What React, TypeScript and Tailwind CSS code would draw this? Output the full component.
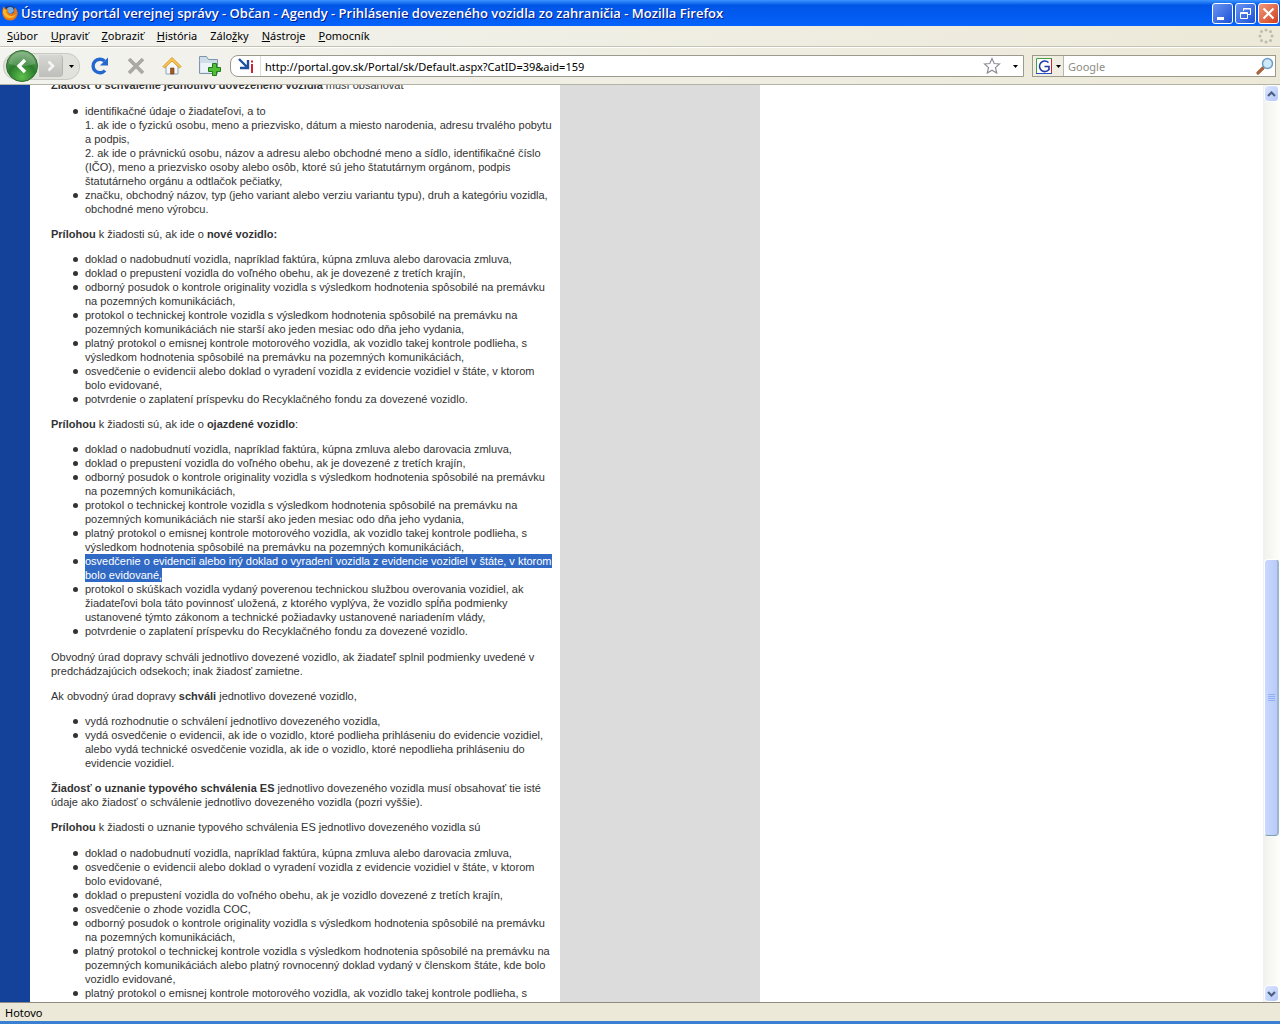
import type { ReactNode } from "react";

const menu = [
  { before: "", key: "S", after: "úbor" },
  { before: "", key: "U", after: "praviť" },
  { before: "", key: "Z", after: "obraziť" },
  { before: "", key: "H", after: "istória" },
  { before: "Zálo", key: "ž", after: "ky" },
  { before: "", key: "N", after: "ástroje" },
  { before: "", key: "P", after: "omocník" },
];

const newCar = [
  "doklad o nadobudnutí vozidla, napríklad faktúra, kúpna zmluva alebo darovacia zmluva,",
  "doklad o prepustení vozidla do voľného obehu, ak je dovezené z tretích krajín,",
  "odborný posudok o kontrole originality vozidla s výsledkom hodnotenia spôsobilé na premávku\nna pozemných komunikáciách,",
  "protokol o technickej kontrole vozidla s výsledkom hodnotenia spôsobilé na premávku na\npozemných komunikáciách nie starší ako jeden mesiac odo dňa jeho vydania,",
  "platný protokol o emisnej kontrole motorového vozidla, ak vozidlo takej kontrole podlieha, s\nvýsledkom hodnotenia spôsobilé na premávku na pozemných komunikáciách,",
];

const recycling =
  "potvrdenie o zaplatení príspevku do Recyklačného fondu za dovezené vozidlo.";

const deregistered =
  "osvedčenie o evidencii alebo doklad o vyradení vozidla z evidencie vozidiel v štáte, v ktorom\nbolo evidované,";

const typeApproval = [
  newCar[0],
  deregistered,
  "doklad o prepustení vozidla do voľného obehu, ak je vozidlo dovezené z tretích krajín,",
  "osvedčenie o zhode vozidla COC,",
  newCar[2],
  "platný protokol o technickej kontrole vozidla s výsledkom hodnotenia spôsobilé na premávku na\npozemných komunikáciách alebo platný rovnocenný doklad vydaný v členskom štáte, kde bolo\nvozidlo evidované,",
  newCar[4],
];

function Bullets({ items }: { items: ReactNode[] }) {
  return (
    <ul>
      {items.map((item, i) => (
        <li key={i} className="flex">
          <span className="mt-[5px] mr-[7px] ml-[22px] size-[5px] shrink-0 rounded-full bg-[#333]" />
          <span>{item}</span>
        </li>
      ))}
    </ul>
  );
}

function TitleBar() {
  const button =
    "flex size-[21px] items-center justify-center rounded-[3px] border border-white";
  return (
    <header className="flex h-[26px] shrink-0 items-center bg-linear-to-b from-[#3c95ff] via-[#0055e6] via-20% to-[#0562fb] pr-px pl-[2px]">
      <svg viewBox="0 0 16 16" className="size-4 shrink-0">
        <circle cx="8" cy="7.5" r="7" fill="#1c3f8c" />
        <path d="M5 3.5q3-2.500 6-.5l1 3-3 3-4-2z" fill="#6fb0e8" />
        <path
          d="M1.500 1.500 4 4l3 .5-1.500 2L7 8c2 2 4 .5 5-1l.5-4.500C15 4 16.200 7 15.400 9.800A7.600 7.600 0 0 1 .6 9.600C0 7 .4 4 1.500 1.500z"
          fill="#e8781a"
        />
        <path d="M1.500 3 3 5l2 .3L4 7l2 3c3 2 6 1 8-1-1.500 4-5 5-8 4S1 9 1 7z" fill="#fbb829" />
      </svg>
      <h1 className="ml-[3px] flex-1 truncate font-['Open_Sans','Noto_Sans',sans-serif] text-[13px] leading-5 font-semibold text-white [text-shadow:1px_1px_0_#0a1883]">
        Ústredný portál verejnej správy - Občan - Agendy - Prihlásenie dovezeného vozidla zo
        zahraničia - Mozilla Firefox
      </h1>
      <div className="flex gap-[2px]">
        <button aria-label="Minimalizovať" className={`${button} bg-linear-to-br from-[#6a93f2] to-[#1b4fd6]`}>
          <svg viewBox="0 0 19 19" className="size-[19px]">
            <path d="M4 13h7v3H4z" fill="#fff" />
          </svg>
        </button>
        <button aria-label="Obnoviť" className={`${button} bg-linear-to-br from-[#6a93f2] to-[#1b4fd6]`}>
          <svg viewBox="0 0 19 19" className="size-[19px]" fill="none" stroke="#fff">
            <path d="M7.500 7V4.500h7v6H12M7 5h8" />
            <path d="M4.500 8.500h7v6h-7zM4 9.500h8" />
          </svg>
        </button>
        <button aria-label="Zavrieť" className={`${button} bg-linear-to-br from-[#f0977c] to-[#cf3a12]`}>
          <svg viewBox="0 0 19 19" className="size-[19px]">
            <path d="m4.500 4.500 10 10m0-10-10 10" stroke="#fff" strokeWidth="2.200" />
          </svg>
        </button>
      </div>
    </header>
  );
}

function MenuBar() {
  return (
    <nav className="flex h-[21px] shrink-0 items-center border-b border-[#c5c2b2] bg-linear-to-r from-[#f3f3ef] to-[#ece9d8] pr-[6px] pl-[7px]">
      <div className="flex flex-1 gap-[13px]">
        {menu.map((m) => (
          <button key={m.key} className="leading-4">
            {m.before}
            <span className="underline">{m.key}</span>
            {m.after}
          </button>
        ))}
      </div>
      <svg viewBox="0 0 16 16" className="size-4" fill="#bdbbb0">
        <circle cx="8" cy="2" r="1.500" />
        <circle cx="12.500" cy="3.600" r="1.500" />
        <circle cx="14" cy="8" r="1.500" />
        <circle cx="12.500" cy="12.400" r="1.500" />
        <circle cx="8" cy="14" r="1.500" />
        <circle cx="3.500" cy="12.400" r="1.500" />
        <circle cx="2" cy="8" r="1.500" />
        <circle cx="3.500" cy="3.600" r="1.500" />
      </svg>
    </nav>
  );
}

function Caret() {
  return (
    <svg viewBox="0 0 5 3" className="h-[3px] w-[5px]">
      <path d="M0 0h5L2.500 3z" fill="#000" />
    </svg>
  );
}

function ToolBar() {
  return (
    <div className="flex h-[38px] shrink-0 items-center border-t border-b border-t-white border-b-[#b5b3a4] bg-linear-to-r from-[#f3f3ef] to-[#ece9d8] pr-1 pl-[3px]">
      <div className="flex h-[27px] items-center rounded-[13px] border border-[#c9c9c3] bg-[#e2e2dd]">
        <button aria-label="Späť" className="-my-1 ml-px">
          <svg viewBox="0 0 34 34" className="size-[34px]">
            <defs>
              <radialGradient id="back" cx=".5" cy=".85" r=".8">
                <stop offset="0" stopColor="#5fc04d" />
                <stop offset=".55" stopColor="#2a7d2c" />
                <stop offset="1" stopColor="#6fa56c" />
              </radialGradient>
            </defs>
            <circle cx="17" cy="17" r="15.500" fill="url(#back)" stroke="#2b6d2d" />
            <path d="M4 15a13 12 0 0 1 26 0q-13 4-26 0z" fill="#fff" opacity=".2" />
            <path d="m20 11-6 6 6 6" fill="none" stroke="#fff" strokeWidth="3.400" />
          </svg>
        </button>
        <button
          aria-label="Ďalej"
          className="flex h-[22px] w-6 items-center justify-center rounded-r-sm border-r border-[#b4b4b0] bg-linear-to-b from-[#d6d6d3] to-[#bebebb]"
        >
          <svg viewBox="0 0 10 12" className="h-3 w-[10px]">
            <path d="m2.500 1.500 4.500 4.500-4.500 4.500" fill="none" stroke="#f5f5f5" strokeWidth="2.600" />
          </svg>
        </button>
        <button aria-label="História stránok" className="flex h-full w-4 items-center justify-center">
          <Caret />
        </button>
      </div>
      <div className="ml-[10px] flex items-center gap-4">
        <button aria-label="Obnoviť stránku">
          <svg viewBox="0 0 20 20" className="size-5">
            <path d="M15 14.500A6.800 6.800 0 1 1 14.500 5" fill="none" stroke="#2468cf" strokeWidth="3.400" />
            <path d="M18 1.500v8h-8z" fill="#2468cf" />
          </svg>
        </button>
        <button aria-label="Zastaviť">
          <svg viewBox="0 0 20 20" className="size-5">
            <path d="m3 3 14 14m0-14L3 17" stroke="#aaa9a3" strokeWidth="3.800" />
          </svg>
        </button>
        <button aria-label="Domov">
          <svg viewBox="0 0 20 20" className="size-5">
            <path d="M4 10v8h12v-8l-6-6z" fill="#f4f7fb" stroke="#8ba3bf" />
            <path d="M8.500 12h3.500v6H8.500z" fill="#a35a1f" stroke="#6b3a12" strokeWidth=".6" />
            <path d="M10 1.500 1 10.500l1.500 1.500L10 5l7.500 7 1.500-1.500z" fill="#fbc85a" stroke="#d88f17" strokeWidth=".9" />
          </svg>
        </button>
        <button aria-label="Nová karta">
          <svg viewBox="0 0 24 22" className="h-[22px] w-6">
            <path d="M1.500 5.500v-4h7l2 3h9v14h-18z" fill="#cfdde9" stroke="#7d96ad" />
            <path d="M2.500 8h16v9.500h-16z" fill="#edf3f8" />
            <path d="M14.500 8.500h4v4h4v4h-4v4h-4v-4h-4v-4h4z" fill="#4fbf35" stroke="#237a18" />
          </svg>
        </button>
      </div>
      <form className="ml-2 flex h-[22px] min-w-0 flex-1 items-center rounded-l-lg border border-[#9b9a8d] bg-white">
        <span className="flex h-full w-[30px] items-center justify-center border-r border-[#ddd]">
          <svg viewBox="0 0 18 16" className="h-4 w-[18px]">
            <path d="m2 1 8 8m1-7v8H3" fill="none" stroke="#1d4f9e" strokeWidth="2.400" />
            <path d="M14 6h2v9h-2zM14 2.500h2v2h-2z" fill="#d21f2f" />
          </svg>
        </span>
        <input
          aria-label="Adresa"
          defaultValue="http://portal.gov.sk/Portal/sk/Default.aspx?CatID=39&aid=159"
          className="min-w-0 flex-1 bg-transparent pt-[2px] pl-1 leading-4 outline-none"
        />
        <button type="button" aria-label="Pridať záložku" className="mr-3">
          <svg viewBox="0 0 18 18" className="size-[18px]">
            <path
              d="m9 1.500 2.200 5 5.300.5-4 3.600 1.200 5.400L9 13.200 4.300 16l1.200-5.400L1.500 7l5.300-.5z"
              fill="#fff"
              stroke="#8e8e98"
              strokeWidth="1.200"
            />
          </svg>
        </button>
        <button type="button" aria-label="Zobraziť adresy" className="mr-[5px]">
          <Caret />
        </button>
      </form>
      <form className="ml-2 flex h-[22px] w-[244px] items-center border border-[#9b9a8d] bg-white">
        <button
          type="button"
          aria-label="Vyhľadávač"
          className="flex h-full w-[31px] items-center gap-1 border-r border-[#b9b7a8] bg-[#f0eee3] pl-[3px]"
        >
          <svg viewBox="0 0 16 16" className="size-4">
            <path d="M0 0h16v16H0z" fill="#fff" />
            <path d="M.5 16V.5H16" fill="none" stroke="#3fa13f" />
            <path d="M15.500 1v14.500" stroke="#c9252b" />
            <path d="M0 15.500h16" stroke="#2a4ec0" />
            <path d="M12.500 4.500A5.300 5.300 0 1 0 13 11.500V8.500H8.500" fill="none" stroke="#1f3aa6" strokeWidth="1.600" />
          </svg>
          <Caret />
        </button>
        <input
          aria-label="Hľadať"
          placeholder="Google"
          className="min-w-0 flex-1 bg-transparent pt-[2px] pl-1 leading-4 outline-none placeholder:text-[#8d8d85]"
        />
        <button type="button" aria-label="Spustiť hľadanie" className="mr-px">
          <svg viewBox="0 0 18 18" className="size-[18px]">
            <path d="m2 16 5-5" stroke="#a8643c" strokeWidth="3.200" strokeLinecap="round" />
            <circle cx="11.500" cy="6.500" r="5" fill="#cfe8fa" stroke="#6d9cc8" strokeWidth="1.500" />
          </svg>
        </button>
      </form>
    </div>
  );
}

function Article() {
  return (
    <article className="-mt-[7px] space-y-3 pr-3 pl-[21px] font-['Liberation_Sans',Arial,sans-serif] text-[11px] leading-[14px] whitespace-pre text-[#333]">
      <p>
        <b>Žiadosť o schválenie jednotlivo dovezeného vozidla</b> musí obsahovať
      </p>
      <section className="space-y-[11px]">
        <Bullets
          items={[
            "identifikačné údaje o žiadateľovi, a to\n1. ak ide o fyzickú osobu, meno a priezvisko, dátum a miesto narodenia, adresu trvalého pobytu\na podpis,\n2. ak ide o právnickú osobu, názov a adresu alebo obchodné meno a sídlo, identifikačné číslo\n(IČO), meno a priezvisko osoby alebo osôb, ktoré sú jeho štatutárnym orgánom, podpis\nštatutárneho orgánu a odtlačok pečiatky,",
            "značku, obchodný názov, typ (jeho variant alebo verziu variantu typu), druh a kategóriu vozidla,\nobchodné meno výrobcu.",
          ]}
        />
        <p>
          <b>Prílohou</b> k žiadosti sú, ak ide o <b>nové vozidlo:</b>
        </p>
        <Bullets items={[...newCar, deregistered, recycling]} />
        <p>
          <b>Prílohou</b> k žiadosti sú, ak ide o <b>ojazdené vozidlo</b>:
        </p>
        <Bullets
          items={[
            ...newCar,
            <mark className="bg-[#316ac5] py-px text-white">
              {"osvedčenie o evidencii alebo iný doklad o vyradení vozidla z evidencie vozidiel v štáte, v ktorom\nbolo evidované,"}
            </mark>,
            "protokol o skúškach vozidla vydaný poverenou technickou službou overovania vozidiel, ak\nžiadateľovi bola táto povinnosť uložená, z ktorého vyplýva, že vozidlo spĺňa podmienky\nustanovené týmto zákonom a technické požiadavky ustanovené nariadením vlády,",
            recycling,
          ]}
        />
      </section>
      <section className="space-y-[11px]">
        <p>
          {"Obvodný úrad dopravy schváli jednotlivo dovezené vozidlo, ak žiadateľ splnil podmienky uvedené v\npredchádzajúcich odsekoch; inak žiadosť zamietne."}
        </p>
        <p>
          Ak obvodný úrad dopravy <b>schváli</b> jednotlivo dovezené vozidlo,
        </p>
        <Bullets
          items={[
            "vydá rozhodnutie o schválení jednotlivo dovezeného vozidla,",
            "vydá osvedčenie o evidencii, ak ide o vozidlo, ktoré podlieha prihláseniu do evidencie vozidiel,\nalebo vydá technické osvedčenie vozidla, ak ide o vozidlo, ktoré nepodlieha prihláseniu do\nevidencie vozidiel.",
          ]}
        />
        <p>
          <b>Žiadosť o uznanie typového schválenia ES</b>
          {" jednotlivo dovezeného vozidla musí obsahovať tie isté\núdaje ako žiadosť o schválenie jednotlivo dovezeného vozidla (pozri vyššie)."}
        </p>
        <p>
          <b>Prílohou</b> k žiadosti o uznanie typového schválenia ES jednotlivo dovezeného vozidla sú
        </p>
      </section>
      <Bullets items={typeApproval} />
    </article>
  );
}

function ScrollBar() {
  const arrow =
    "flex h-[17px] w-[15px] shrink-0 items-center justify-center rounded-sm border border-white bg-linear-to-br from-[#dbe5ff] to-[#b3c8f8]";
  return (
    <div className="flex w-[17px] shrink-0 flex-col items-center bg-linear-to-r from-[#f0f0ec] to-[#fefefb]">
      <button aria-label="Posunúť nahor" className={arrow}>
        <svg viewBox="0 0 9 6" className="h-[6px] w-[9px]">
          <path d="M1 5l3.500-3.500L8 5" fill="none" stroke="#4d6185" strokeWidth="2.200" />
        </svg>
      </button>
      <div className="flex-[458]" />
      <div className="flex w-[15px] flex-[276] flex-col items-center justify-center gap-px rounded-sm border border-r-2 border-white border-r-[#9db5cf] border-b-[#7ba0b4] bg-linear-to-r from-[#c9d8fe] to-[#b9cbfa]">
        <span className="h-px w-[7px] bg-[#8fb0f5]" />
        <span className="h-px w-[7px] bg-[#8fb0f5]" />
        <span className="h-px w-[7px] bg-[#8fb0f5]" />
        <span className="h-px w-[7px] bg-[#8fb0f5]" />
      </div>
      <div className="flex-[149]" />
      <button aria-label="Posunúť nadol" className={arrow}>
        <svg viewBox="0 0 9 6" className="h-[6px] w-[9px]">
          <path d="M1 1l3.500 3.500L8 1" fill="none" stroke="#4d6185" strokeWidth="2.200" />
        </svg>
      </button>
    </div>
  );
}

export default function App() {
  return (
    <div className="flex h-screen flex-col overflow-hidden bg-white font-['Noto_Sans','DejaVu_Sans',sans-serif] text-[11px] text-black">
      <TitleBar />
      <MenuBar />
      <ToolBar />
      <div className="flex min-h-0 flex-1">
        <main className="flex min-w-0 flex-1 overflow-hidden">
          <div className="w-[30px] shrink-0 bg-[#14429a]" />
          <div className="w-[530px] shrink-0">
            <Article />
          </div>
          <div className="w-[200px] shrink-0 bg-[#dcdcdc]" />
        </main>
        <ScrollBar />
      </div>
      <footer className="flex h-[22px] shrink-0 items-center border-t border-b-[3px] border-t-[#8e8c80] border-b-[#3a80d2] bg-[#ece9d8] pt-[2px] pl-[5px] leading-4">
        Hotovo
      </footer>
    </div>
  );
}
